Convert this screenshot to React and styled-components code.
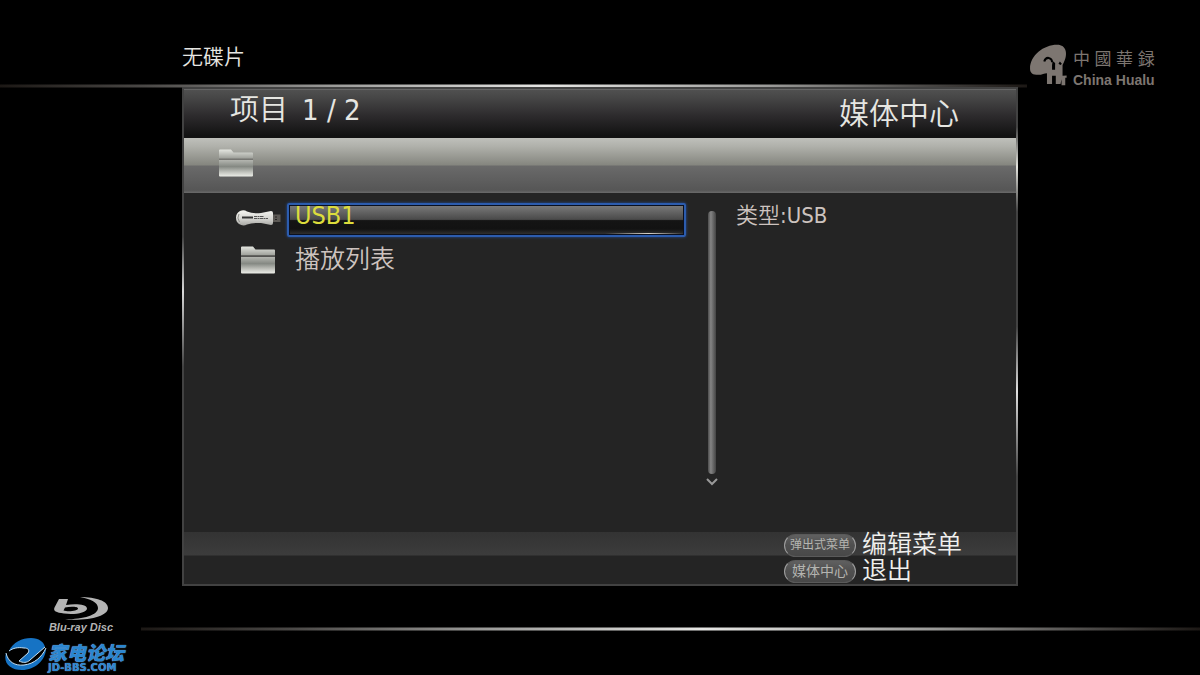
import React, { useState } from 'react';
import styled, { createGlobalStyle } from 'styled-components';

const GlobalStyle = createGlobalStyle`
  * {
    box-sizing: border-box;
  }

  body {
    margin: 0;
    background: #000;
    color: #e6e6e2;
    font-family: 'DejaVu Sans Condensed', 'Noto Sans CJK SC', sans-serif;
    font-weight: 350;
  }
`;

const Page = styled.div`
  display: flex;
  flex-direction: column;
  min-height: 100vh;
`;

const TopBar = styled.header`
  display: grid;
  grid-template-columns: minmax(0, 1fr) 173px;
  height: 87px;
`;

const TopLeft = styled.div`
  display: flex;
  flex-direction: column;
  justify-content: space-between;
  padding-bottom: 1px;
`;

const DiscStatus = styled.p`
  margin: 0;
  padding: 44px 0 0 182px;
  font-size: 21px;
  line-height: 26px;
`;

const Rule = styled.div`
  height: 4px;
  margin-top: ${(props) => props.$top || 0}px;
  background: linear-gradient(
      to bottom,
      rgba(0, 0, 0, 0.5) 1px,
      transparent 1px,
      transparent 3px,
      rgba(0, 0, 0, 0.5) 3px
    ),
    linear-gradient(to right, #1c1815, #4a4846 14%, #9a9a98 32%, #e6e6e4 53%, #9a9a98 75%, #4a4846 90%, #1c1815);
`;

const Brand = styled.div`
  display: flex;
  gap: 5px;
  padding: 44px 0 0 3px;
  color: #7d7671;
`;

const BrandText = styled.div`
  display: flex;
  flex-direction: column;
`;

const BrandCn = styled.span`
  display: flex;
  justify-content: space-between;
  font-family: 'Noto Sans CJK TC', sans-serif;
  font-size: 17px;
  font-weight: 400;
  line-height: 27px;
`;

const BrandEn = styled.span`
  font-family: 'Liberation Sans', sans-serif;
  font-weight: bold;
  font-size: 14px;
  line-height: 18px;
  white-space: nowrap;
`;

const Panel = styled.main`
  flex: 1;
  display: flex;
  flex-direction: column;
  margin: 0 182px;
  padding: 2px;
  background: linear-gradient(to bottom, transparent 30%, #d8d8d8 41%, transparent 56%) left / 2px 100% no-repeat,
    linear-gradient(to bottom, transparent 8%, #e4e4de 16%, transparent 25%, transparent 48%, #e0e0e0 61%, transparent 78%)
      right / 2px 100% no-repeat,
    #424242;
`;

const PanelHeader = styled.div`
  display: flex;
  justify-content: space-between;
  height: 49px;
  padding: 0 57px 0 46px;
  background: linear-gradient(to bottom, #505050, #474747 15%, #2c2a2c 55%, #121212 95%);
  border-top: 1px solid #666;
`;

const Heading = styled.h1`
  display: flex;
  gap: 14px;
  margin: 0;
  font-size: 29px;
  font-weight: 350;
  line-height: 40px;
`;

const SectionName = styled.h2`
  margin: 4px 0 0;
  font-size: 30px;
  font-weight: 350;
  line-height: 40px;
`;

const PathBar = styled.div`
  display: flex;
  align-items: center;
  height: 55px;
  padding: 0 34px 5px;
  background: linear-gradient(to bottom, #bfc0bb, #b0b1ab 15%, #85867f 49%, #6a6a6a 51%, #565656 95%, #6a6a6a);
`;

const PanelBody = styled.div`
  flex: 1;
  display: grid;
  grid-template-columns: minmax(0, 1fr) 50px 280px;
  background: #242424;
`;

const ItemList = styled.ul`
  display: flex;
  flex-direction: column;
  gap: 4px;
  margin: 0;
  padding: 9px 0 0 50px;
  list-style: none;
`;

const Item = styled.button`
  display: grid;
  grid-template-columns: 48px 1fr;
  align-items: center;
  justify-items: center;
  gap: 5px;
  width: 100%;
  height: 36px;
  padding: 0;
  border: 0;
  background: none;
  color: ${(props) => (props.$selected ? '#dcdc3c' : '#cdc3bf')};
  font: inherit;
  font-size: 25px;
  text-align: left;
  cursor: pointer;
  outline: none;
`;

const ItemLabel = styled.span`
  width: 100%;
  height: 34px;
  padding: 0 6px;
  border: 2px solid ${(props) => (props.$selected ? '#2c5cae' : 'transparent')};
  border-radius: 2px;
  line-height: ${(props) => (props.$selected ? 22 : 30)}px;
  ${(props) =>
    props.$selected &&
    `
    background:
      linear-gradient(to right, transparent 80%, #d8d2c8 91%, transparent) 0 28px / 100% 1px no-repeat,
      linear-gradient(to bottom, #7c7c7c, #4a4a4a 48%, #141414 52%, #121212 80%, #353535);
    box-shadow: 0 0 3px #2450a0, inset 0 0 0 1px #0a1020;
  `}
`;

const ScrollColumn = styled.div`
  display: flex;
  flex-direction: column;
  align-items: center;
  gap: 4px;
  padding: 18px 0 46px 2px;
`;

const ScrollTrack = styled.div`
  flex: 1;
  width: 8px;
  border-radius: 4px;
  background: linear-gradient(to right, #4c4c4c, #858585 35%, #6c6c6c 60%, #444);
`;

const Info = styled.p`
  margin: 0;
  padding-top: 9px;
  color: #cdc3bf;
  font-size: 22px;
  line-height: 28px;
`;

const PanelFooter = styled.div`
  display: flex;
  justify-content: flex-end;
  height: 52px;
  padding-right: 54px;
  background: linear-gradient(to bottom, #333 0, #3c3c3c 23px, #242424 24px);
`;

const HintList = styled.div`
  display: flex;
  flex-direction: column;
`;

const Hint = styled.button`
  display: flex;
  align-items: center;
  gap: 6px;
  height: 26px;
  padding: 0;
  border: 0;
  background: none;
  color: #f0f0ee;
  font: inherit;
  font-size: 25px;
  line-height: 26px;
  cursor: pointer;
`;

const Key = styled.span`
  width: 72px;
  height: 23px;
  border: 1px solid #5a5a5a;
  border-left-color: #a0a0a0;
  border-right-color: #a0a0a0;
  border-radius: 12px;
  background: linear-gradient(to bottom, #606060, #505050 45%, #484848);
  color: #b4b4b0;
  font-size: ${(props) => props.$size}px;
  font-weight: 400;
  line-height: 20px;
  text-align: center;
  white-space: nowrap;
`;

const BottomBar = styled.footer`
  display: grid;
  grid-template-columns: 141px minmax(0, 1fr);
  height: 89px;
`;

const Logos = styled.div`
  display: flex;
  flex-direction: column;
  gap: 5px;
  padding-top: 11px;
`;

const BluRay = styled.div`
  display: flex;
  flex-direction: column;
  align-items: center;
  width: 64px;
  margin-left: 49px;
  color: #b4b4b4;
  font-family: 'Liberation Sans', sans-serif;
  font-size: 11px;
  font-weight: bold;
  font-style: italic;
  line-height: 12px;
  white-space: nowrap;
`;

const Forum = styled.a`
  display: flex;
  gap: 1px;
  padding-left: 4px;
  color: #2a86d0;
  text-decoration: none;
`;

const ForumText = styled.span`
  display: flex;
  flex-direction: column;
  padding-top: 3px;
  white-space: nowrap;
  text-shadow: 0 0 1px #a8d0f0;
`;

const ForumCn = styled.span`
  font-family: 'Noto Sans CJK SC', sans-serif;
  font-size: 19px;
  font-weight: 900;
  font-style: italic;
  line-height: 21px;
`;

const ForumEn = styled.span`
  font-family: 'DejaVu Sans', sans-serif;
  font-size: 10px;
  font-weight: bold;
  line-height: 12px;
`;

const FolderIcon = () => (
  <svg width="36" height="28" viewBox="0 0 36 28" aria-hidden="true">
    <defs>
      <linearGradient id="folderBack" x1="0" y1="0" x2="0" y2="1">
        <stop offset="0" stopColor="#e4e6e0" />
        <stop offset="1" stopColor="#9c9e98" />
      </linearGradient>
      <linearGradient id="folderFront" x1="0" y1="0" x2="0" y2="1">
        <stop offset="0" stopColor="#b4b6b0" />
        <stop offset="0.4" stopColor="#858983" />
        <stop offset="0.75" stopColor="#c4c6c0" />
        <stop offset="1" stopColor="#eceee8" />
      </linearGradient>
    </defs>
    <path d="M1 1.5 Q1 .5 2 .5 H13 L15.500 3.500 H34 Q35 3.500 35 4.500 V9.500 H1 Z" fill="url(#folderBack)" />
    <path d="M1 11 H35 V26.500 Q35 27.500 34 27.500 H2 Q1 27.500 1 26.500 Z" fill="url(#folderFront)" />
    <path d="M1 10.200 H35" stroke="#6a6a68" strokeWidth="1" />
  </svg>
);

const UsbIcon = () => (
  <svg width="46" height="22" viewBox="0 0 46 22" aria-hidden="true">
    <defs>
      <linearGradient id="usbBody" x1="0" y1="0" x2="0" y2="1">
        <stop offset="0" stopColor="#f4f4f0" />
        <stop offset="0.55" stopColor="#d6d6d2" />
        <stop offset="1" stopColor="#a8a8a4" />
      </linearGradient>
    </defs>
    <path d="M37 5.500 H45.500 V13 H37 Z" fill="#5c5955" />
    <path d="M40 7.500h2v1h-2zM40 10h2v1h-2z" fill="#252321" />
    <path
      d="M1 8.500 Q1 4 5 2 Q9 .5 12 2.500 Q18 5 26 4 L36 2 Q38 2 38 4 V14 Q38 16 36 16 L26 14 Q18 13.500 12 15.500 Q8 17.500 4 15 Q1 13 1 8.500 Z"
      fill="url(#usbBody)"
    />
    <path d="M4 5 Q1.500 9 4.500 13" fill="none" stroke="#8e8e8a" />
    <path d="M7 8.500 H18" stroke="#333" strokeWidth="2" />
    <path d="M19 7.500 H29M19 9.500 H33" stroke="#555" strokeWidth="1" strokeDasharray="3 .5 2 .5" />
  </svg>
);

const HualuMark = () => (
  <svg width="38" height="42" viewBox="0 0 112 124" aria-hidden="true">
    <path
      d="M0 72 C0 34 40 2 80 2 C108 2 112 30 100 54 L96 62 V94 L108 93 V100 H104 V122 H93 V104 L90 118 H76 V94 H65 V118 H50 V86 C42 86 36 91 24 91 C8 91 0 86 0 72 Z"
      fill="currentColor"
    />
    <path d="M42 52 Q45 40 55 41 Q65 43 65 54" fill="none" stroke="#000" strokeWidth="6" />
    <path d="M67 50 L74 56 V76 H65 V62 Z" fill="#000" />
    <path d="M88 52 L94 58 L90 62 L84 58 Z" fill="#000" />
  </svg>
);

const BluRayMark = () => (
  <svg width="56" height="24" viewBox="0 0 56 24" aria-hidden="true">
    <path
      fillRule="evenodd"
      d="M6 2 H15 L13 8 C23 6.500 34 7.500 34 11.500 C34 16 21 18 11 16.500 C3 15.500 0 14 1.500 10.500 Z M12 10.500 L10.500 13.500 C15 15 25 14 25 11.500 C25 9.500 17 9.500 12 10.500 Z"
      fill="currentColor"
    />
    <path
      d="M27 0 C43 0 55 4 55 11 C55 19 37 24 12 22.500 C31 22 45 18 45 11 C45 5 37 2 27 0 Z"
      fill="currentColor"
    />
  </svg>
);

const ForumMark = () => (
  <svg width="43" height="34" viewBox="0 0 43 34" aria-hidden="true">
    <path
      d="M5 13 C9 4 18 0 27 0 C35 0 40 4 41 9 L26 22 C23 25 19 25 15 23 L24 15 C26 12 24 10 20 10 C14 9 9 10 5 13 Z"
      fill="#1673c4"
    />
    <path d="M42 10 C42 22 31 32 18 32 C6 32 -1 25 2 15 C4 24 11 28 20 27 C30 26 38 19 42 10 Z" fill="#1673c4" />
    <path
      d="M5 13 C9 10 14 9 20 10 C24 10 26 12 24 15 L15 23 C19 25 23 25 26 22 L41 9 M2 15 C4 24 11 28 20 27 C30 26 38 19 42 10"
      fill="none"
      stroke="#c4dff2"
      strokeWidth="1"
    />
  </svg>
);

const items = [
  { id: 'usb1', label: 'USB1', type: 'USB', Icon: UsbIcon },
  { id: 'playlist', label: '播放列表', type: '播放列表', Icon: FolderIcon },
];

const hints = [
  { keyName: '弹出式菜单', action: '编辑菜单', size: 12 },
  { keyName: '媒体中心', action: '退出', size: 14 },
];

const App = () => {
  const [selected, setSelected] = useState(0);

  return (
    <Page>
      <GlobalStyle />
      <TopBar>
        <TopLeft>
          <DiscStatus>无碟片</DiscStatus>
          <Rule />
        </TopLeft>
        <Brand>
          <HualuMark />
          <BrandText>
            <BrandCn>
              <span>中</span>
              <span>國</span>
              <span>華</span>
              <span>録</span>
            </BrandCn>
            <BrandEn>China Hualu</BrandEn>
          </BrandText>
        </Brand>
      </TopBar>

      <Panel>
        <PanelHeader>
          <Heading>
            <span>项目</span>
            <span>
              {selected + 1} / {items.length}
            </span>
          </Heading>
          <SectionName>媒体中心</SectionName>
        </PanelHeader>
        <PathBar>
          <FolderIcon />
        </PathBar>
        <PanelBody>
          <ItemList>
            {items.map(({ id, label, Icon }, index) => (
              <li key={id}>
                <Item type="button" $selected={index === selected} onClick={() => setSelected(index)}>
                  <Icon />
                  <ItemLabel $selected={index === selected}>{label}</ItemLabel>
                </Item>
              </li>
            ))}
          </ItemList>
          <ScrollColumn>
            <ScrollTrack />
            <svg width="12" height="8" viewBox="0 0 12 8" aria-hidden="true">
              <path d="M1 1 L6 6 L11 1" fill="none" stroke="#999" strokeWidth="2" />
            </svg>
          </ScrollColumn>
          <Info>类型:{items[selected].type}</Info>
        </PanelBody>
        <PanelFooter>
          <HintList>
            {hints.map((hint) => (
              <Hint key={hint.keyName} type="button">
                <Key $size={hint.size}>{hint.keyName}</Key>
                {hint.action}
              </Hint>
            ))}
          </HintList>
        </PanelFooter>
      </Panel>

      <BottomBar>
        <Logos>
          <BluRay>
            <BluRayMark />
            Blu-ray Disc
          </BluRay>
          <Forum href="#forum">
            <ForumMark />
            <ForumText>
              <ForumCn>家电论坛</ForumCn>
              <ForumEn>JD-BBS.COM</ForumEn>
            </ForumText>
          </Forum>
        </Logos>
        <Rule $top={41} />
      </BottomBar>
    </Page>
  );
};

export default App;
